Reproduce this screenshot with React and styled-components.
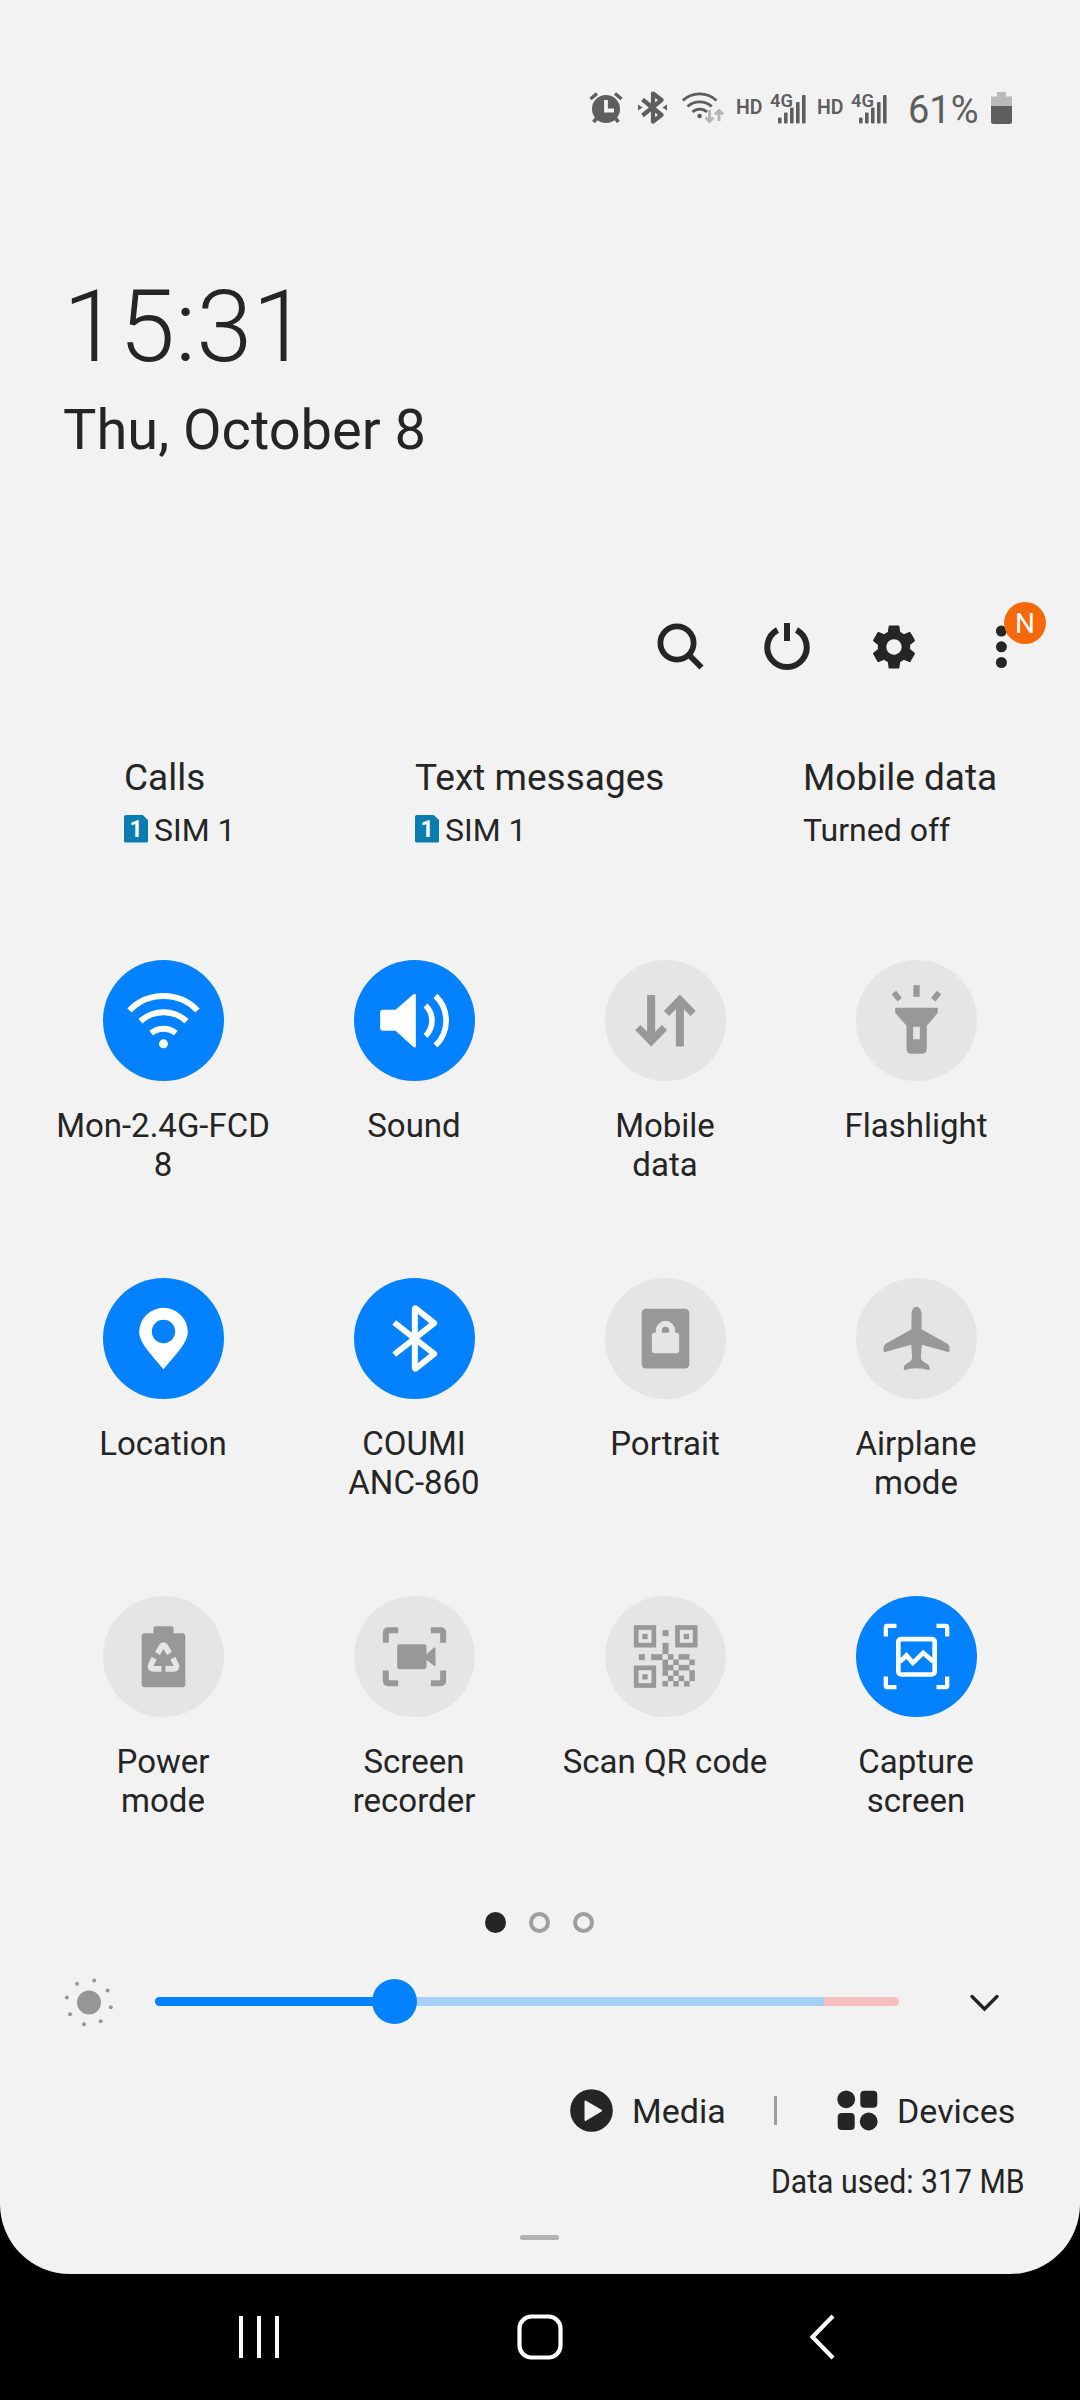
import React from "react";
import styled, { createGlobalStyle } from "styled-components";

const INK = "#252525";
const BLUE = "#0381fe";
const MUTED = "#989898";
const OFF = "#e5e5e5";
const SURFACE = "#f2f2f2";
const STATUS = "#5e5e5e";

const GlobalStyle = createGlobalStyle`
  html, body { margin: 0; padding: 0; background: #000; }
  * { box-sizing: border-box; }
  svg { display: block; flex: none; }
`;

const Screen = styled.div`
  width: 1080px;
  height: 2400px;
  display: flex;
  flex-direction: column;
  overflow: hidden;
  background: #000;
  color: ${INK};
  font-family: Roboto, "Liberation Sans", sans-serif;
`;

const Panel = styled.main`
  height: 2274px;
  display: flex;
  flex-direction: column;
  background: ${SURFACE};
  border-radius: 0 0 70px 70px;
`;

const StatusBar = styled.header`
  height: 55px;
  margin-top: 80px;
  padding-right: 68px;
  display: flex;
  align-items: center;
  justify-content: flex-end;
  color: ${STATUS};
`;

const StatusItem = styled.div`
  width: ${(p) => p.$w}px;
  margin-left: ${(p) => p.$gap || 0}px;
`;

const Hd = styled.span`
  width: 26px;
  margin-left: ${(p) => p.$gap}px;
  font-size: 19.5px;
  font-weight: 600;
  line-height: 24px;
  white-space: nowrap;
`;

const Percent = styled.span`
  width: 72px;
  margin: 4px 11px 0 21px;
  font-size: 38px;
  line-height: 44px;
  white-space: nowrap;
`;

const ClockBlock = styled.section`
  height: 331px;
  margin-top: 132px;
  padding-top: 1px;
  padding-left: 63px;
`;

const Time = styled.div`
  font-size: 101px;
  font-weight: 300;
  line-height: 118px;
`;

const DateLine = styled.div`
  margin-top: 11px;
  font-size: 56px;
  line-height: 66px;
`;

const Actions = styled.nav`
  height: 98px;
  padding-right: 25px;
  display: flex;
  justify-content: flex-end;
`;

const ActionButton = styled.div`
  position: relative;
  width: 107.2px;
  height: 98px;
  display: flex;
  align-items: center;
  justify-content: center;
`;

const Badge = styled.span`
  position: absolute;
  top: 4px;
  right: 9px;
  width: 42px;
  height: 42px;
  border-radius: 50%;
  background: #f6690b;
  color: #fff;
  font-size: 28px;
  line-height: 43px;
  text-align: center;
`;

const SimRow = styled.section`
  height: 95px;
  margin-top: 60px;
  padding-left: 124px;
  display: grid;
  grid-template-columns: 291px 388px auto;
`;

const SimTitle = styled.div`
  font-size: 37px;
  line-height: 44px;
`;

const SimValue = styled.div`
  margin-top: 10px;
  display: flex;
  align-items: center;
  gap: 6px;
  font-size: 32px;
  line-height: 40px;
`;

const SimChip = styled.span`
  width: 24px;
  height: 28px;
  margin-bottom: 3px;
  border-radius: 2px;
  background: #0a7cb0;
  clip-path: polygon(0 0, 76% 0, 100% 20%, 100% 100%, 0 100%);
  color: #fff;
  font-size: 23px;
  font-weight: 700;
  line-height: 29px;
  text-align: center;
`;

const Tiles = styled.section`
  margin-top: 109px;
  padding-left: 38px;
  display: grid;
  grid-template-columns: repeat(4, 251px);
  grid-template-rows: 318px 318px 275px;
`;

const Tile = styled.div`
  display: flex;
  flex-direction: column;
  align-items: center;
`;

const TileCircle = styled.div`
  width: 121px;
  height: 121px;
  border-radius: 50%;
  background: ${(p) => (p.$on ? BLUE : OFF)};
  color: ${(p) => (p.$on ? "#fff" : MUTED)};
`;

const TileLabel = styled.div`
  margin-top: 26px;
  padding-right: 1px;
  font-size: 33px;
  line-height: 38.7px;
  text-align: center;
  white-space: pre;
`;

const Pager = styled.div`
  height: 21px;
  margin-top: 41px;
  padding-right: 2px;
  display: flex;
  justify-content: center;
  gap: 23px;
`;

const PageDot = styled.span`
  width: 21px;
  height: 21px;
  border-radius: 50%;
  border: 4px solid ${(p) => (p.$active ? INK : "#9f9f9f")};
  background: ${(p) => (p.$active ? INK : "transparent")};
`;

const BrightnessRow = styled.section`
  height: 60px;
  margin-top: 38px;
  padding-left: 64px;
  display: flex;
  align-items: center;
`;

const Track = styled.div`
  width: 744px;
  height: 9px;
  margin: 0 68px 0 41px;
  display: flex;
  align-items: center;
  border-radius: 5px;
  background: linear-gradient(to right, #a8d0f7 669px, #f6bebe 669px);
`;

const Filled = styled.div`
  width: 239px;
  height: 9px;
  border-radius: 5px 0 0 5px;
  background: ${BLUE};
`;

const Thumb = styled.div`
  width: 45px;
  height: 45px;
  margin-left: -22px;
  flex: none;
  border-radius: 50%;
  background: ${BLUE};
`;

const Links = styled.section`
  height: 44px;
  margin-top: 57px;
  padding-right: 66px;
  display: flex;
  align-items: center;
  justify-content: flex-end;
`;

const LinkText = styled.span`
  width: ${(p) => p.$w}px;
  margin-left: 19px;
  font-size: 34px;
  line-height: 40px;
  padding-top: 1px;
`;

const Divider = styled.span`
  width: 3px;
  height: 29px;
  margin: 0 60px 0 48px;
  background: #9c9c9c;
`;

const DataUsed = styled.div`
  height: 40px;
  margin-top: 29px;
  padding-right: 55px;
  font-size: 34px;
  line-height: 40px;
  text-align: right;

  span {
    display: inline-block;
    transform: scaleX(0.888);
    transform-origin: right center;
  }
`;

const Handle = styled.div`
  width: 39px;
  height: 5px;
  margin: 34px 0 0 520px;
  border-radius: 3px;
  background: #b1b1b1;
`;

const NavBar = styled.footer`
  height: 126px;
  display: flex;
  align-items: center;
  padding-left: 239px;
  color: #fff;
`;

const NavButton = styled.div`
  margin-left: ${(p) => p.$gap || 0}px;
`;

const TileSvg = ({ children }) => (
  <svg width="121" height="121" viewBox="-181.5 -181.5 363 363" fill="currentColor">
    {children}
  </svg>
);

const stroke = (w, extra) => ({ fill: "none", stroke: "currentColor", strokeWidth: w, ...extra });

const WifiIcon = () => (
  <TileSvg>
    <g {...stroke(18)}>
      <path d="M-102-30A142 142 0 0 1 102-30" />
      <path d="M-69 2A102 102 0 0 1 69 2" />
      <path d="M-37 38A58 58 0 0 1 37 38" />
    </g>
    <circle cy="70" r="13.5" />
  </TileSvg>
);

const SoundIcon = () => (
  <TileSvg>
    <path d="M-96-32H-57L-4-78Q4-84 4-75V76Q4 85-4 79L-57 31H-96Q-103 31-103 24V-25Q-103-32-96-32Z" />
    <g {...stroke(17)}>
      <path d="M33-45A63 63 0 0 1 33 46" />
      <path d="M63-74A103 103 0 0 1 63 75" />
    </g>
  </TileSvg>
);

const DataIcon = () => (
  <TileSvg>
    <path d="M-43-76V66M-83 21L-43 62-3 21M43 77V-65M3-21L43-62 83-21" {...stroke(22)} />
    <path d="M-55-76H-31V60H-55ZM31-60H55V77H31Z" />
  </TileSvg>
);

const FlashlightIcon = () => (
  <TileSvg>
    <rect x="-9.5" y="-106" width="19" height="35" />
    <rect x="-8.5" y="-14" width="17" height="28" transform="translate(-59 -73) rotate(-38)" />
    <rect x="-8.5" y="-14" width="17" height="28" transform="translate(59 -73) rotate(38)" />
    <path
      fillRule="evenodd"
      d="M-64-38H64V-23L31 16V84Q31 100 15 100H-15Q-30 100-30 84V16L-64-23ZM-10 19V56H10V19Z"
    />
  </TileSvg>
);

const LocationIcon = () => (
  <TileSvg>
    <path
      fillRule="evenodd"
      d="M0 93C-14 71-73 18-73-19A73 73 0 0 1 73-19C73 18 14 71 0 93ZM0-56A35 35 0 1 0 0 14A35 35 0 1 0 0-56Z"
    />
  </TileSvg>
);

const BluetoothIcon = () => (
  <TileSvg>
    <path d="M-61-48L59 46 4 90Q1 92 1 87V-87Q1-92 4-90L59-46-61 48" {...stroke(18, { strokeLinejoin: "round" })} />
  </TileSvg>
);

const PortraitIcon = () => (
  <TileSvg>
    <rect x="-71.5" y="-89" width="143" height="179" rx="13" />
    <rect x="-41" y="-17" width="82" height="61" rx="8" fill={OFF} />
    <path d="M-20-12V-24A20 20 0 0 1 20-24V-12" fill="none" stroke={OFF} strokeWidth="18" />
  </TileSvg>
);

const AirplaneIcon = () => (
  <TileSvg>
    <path d="M0-95C9-95 15-84 15-73V-28L90 14Q99 19 99 29V36Q99 42 92 40L16 19 13 55Q13 65 20 69L33 77Q39 81 39 88V95Q20 89 0 89T-38 95V88Q-38 81-32 77L-20 69Q-13 65-13 55L-16 19-92 40Q-99 42-99 36V29Q-99 19-90 14L-15-28V-73C-15-84-9-95 0-95Z" />
  </TileSvg>
);

const PowerModeIcon = () => (
  <TileSvg>
    <rect x="-65.5" y="-70" width="131" height="162" rx="9" />
    <rect x="-30" y="-91" width="60" height="30" rx="6" />
    <g fill="none" stroke={OFF} strokeWidth="17">
      <path d="M-18-9L-6-30Q0-38 6-30L18-9" />
      <path d="M-28 5L-38 25Q-42 37-30 37H-6" />
      <path d="M28 5L38 25Q42 37 30 37H6" />
    </g>
    <path d="M0-19L24 27H-24Z" />
  </TileSvg>
);

const RecorderIcon = () => (
  <TileSvg>
    <path
      d="M-49-79H-78Q-86-79-86-71V-41M49-79H78Q86-79 86-71V-41M-49 80H-78Q-86 80-86 72V42M49 80H78Q86 80 86 72V42"
      {...stroke(18)}
    />
    <rect x="-52" y="-37" width="88" height="75" rx="7" />
    <path d="M34-5L58-26Q63-30 63-24V25Q63 31 58 27L34 9Z" />
  </TileSvg>
);

const QR_CELLS = ["010110", "101001", "110110", "101001", "010101", "101010"];

const QrIcon = () => (
  <TileSvg>
    {[[-95, -94], [29, -94], [-95, 27]].map(([x, y]) => (
      <g key={`${x}${y}`}>
        <rect x={x + 7} y={y + 7} width="53" height="53" {...stroke(14)} />
        <rect x={x + 25.5} y={y + 26} width="16" height="16" />
      </g>
    ))}
    <rect x="-9" y="-79" width="18" height="18" />
    <rect x="-9" y="-41" width="18" height="34" />
    <rect x="-80" y="-7" width="18" height="18" />
    <rect x="-43" y="-7" width="34" height="18" />
    {QR_CELLS.map((row, r) =>
      [...row].map((c, i) =>
        c === "1" ? <rect key={`${r}-${i}`} x={-9 + i * 16.1} y={-7 + r * 16.1} width="16.6" height="16.6" /> : null
      )
    )}
  </TileSvg>
);

const CaptureIcon = () => (
  <TileSvg>
    <path
      d="M-60-92H-88Q-92-92-92-88V-60M60-92H88Q92-92 92-88V-60M-60 92H-88Q-92 92-92 88V60M60 92H88Q92 92 92 88V60"
      {...stroke(13)}
    />
    <rect x="-54.5" y="-52" width="109" height="106" rx="8" {...stroke(14)} />
    <path d="M-50 16L-30-3-11 19 20-11 50 15" {...stroke(14)} />
  </TileSvg>
);

const AlarmIcon = () => (
  <svg width="34" height="32" viewBox="0 0 34 32" fill="currentColor">
    <circle cx="17" cy="17" r="14" />
    <path d="M1.5 7L8 1.5M32.5 7L26 1.5" {...stroke(3.4)} />
    <path d="M8 26L4.5 30M26 26L29.5 30" {...stroke(3.6)} />
    <path d="M17 8V18.500H25" fill="none" stroke={SURFACE} strokeWidth="3.8" />
  </svg>
);

const StatusBluetoothIcon = () => (
  <svg width="29" height="33" viewBox="0 0 29 33" fill="currentColor">
    <path d="M4.500 8.500L23.500 24 15 30.500V2.500L23.500 9 4.500 24.500" {...stroke(4.2, { strokeLinejoin: "round" })} />
    <path d="M0 13.500L4.500 16.500 0 19.500ZM29 13.500L24.500 16.500 29 19.500Z" />
  </svg>
);

const StatusWifiIcon = () => (
  <svg width="42" height="32" viewBox="0 0 42 32" fill="currentColor">
    <g {...stroke(2.8)}>
      <path d="M.8 8.500A25 25 0 0 1 34.500 8.500" />
      <path d="M5.500 14.500A18 18 0 0 1 29.800 14.500" />
      <path d="M10.500 20A10.500 10.500 0 0 1 25 20" />
    </g>
    <circle cx="17.6" cy="24" r="2.3" />
    <g fill="none" stroke="#b4b4b4" strokeWidth="2.8">
      <path d="M27.500 18V29M23.500 25.500L27.500 29.500 31.500 25.500" />
      <path d="M37 29V19M33 22.500L37 18.500 41 22.500" />
    </g>
  </svg>
);

const SignalBox = styled(StatusItem)`
  svg { overflow: visible; }
`;

const Signal = () => (
  <SignalBox $w={36} $gap={8}>
    <svg width="36" height="32" viewBox="0 0 36 32" fill="currentColor">
      {[[8, 25.5], [14, 20.5], [20, 15.5], [26, 10], [32, 3]].map(([x, y]) => (
        <rect key={x} x={x} y={y} width="3.6" height={31.5 - y} rx="1" />
      ))}
      <text x="0" y="15" fontSize="18.5" fontWeight="600" textLength="23" lengthAdjust="spacingAndGlyphs" stroke={SURFACE} strokeWidth="2" paintOrder="stroke">
        4G
      </text>
    </svg>
  </SignalBox>
);

const BatteryIcon = () => (
  <svg width="21" height="32" viewBox="0 0 21 32">
    <path d="M6 0H15V4.500H21V14H0V4.500H6Z" fill="#bababa" />
    <path d="M0 14H21V29.500Q21 32 18.500 32H2.500Q0 32 0 29.500Z" fill={STATUS} />
  </svg>
);

const SearchIcon = () => (
  <svg width="48" height="48" viewBox="0 0 48 48" {...stroke(5.8)}>
    <circle cx="21" cy="20" r="16.6" />
    <path d="M33 32L45.500 44.500" />
  </svg>
);

const PowerIcon = () => (
  <svg width="48" height="48" viewBox="0 0 48 48" {...stroke(6)}>
    <path d="M14.500 7A19.700 19.700 0 1 0 33.500 7" />
    <path d="M24 0V18" />
  </svg>
);

const GearIcon = () => (
  <svg width="54" height="54" viewBox="0 0 24 24" fill={INK}>
    <path d="M19.140 12.940c.04-.3.060-.610.060-.940 0-.320-.020-.640-.070-.940l2.030-1.580c.180-.140.230-.410.120-.610l-1.920-3.320c-.120-.220-.370-.290-.590-.220l-2.390.960c-.5-.380-1.030-.7-1.620-.940l-.360-2.540c-.040-.240-.240-.410-.480-.410h-3.840c-.240 0-.430.170-.470.410l-.360 2.540c-.590.240-1.130.570-1.620.940l-2.390-.960c-.220-.080-.470 0-.590.220L2.740 8.870c-.120.210-.080.470.120.610l2.030 1.580c-.050.3-.090.630-.090.940s.020.640.070.940l-2.030 1.580c-.180.140-.230.410-.120.610l1.920 3.320c.120.220.370.290.590.220l2.390-.960c.5.380 1.030.7 1.620.940l.360 2.540c.050.240.240.410.480.410h3.840c.240 0 .440-.170.470-.410l.360-2.540c.590-.240 1.130-.560 1.620-.940l2.390.960c.220.080.470 0 .590-.220l1.920-3.320c.120-.220.070-.470-.120-.610l-2.010-1.580zM12 15.400c-1.880 0-3.400-1.520-3.400-3.400s1.520-3.400 3.400-3.400 3.400 1.520 3.400 3.400-1.520 3.400-3.400 3.400z" />
  </svg>
);

const MoreIcon = () => (
  <svg width="12" height="44" viewBox="0 0 12 44" fill={INK}>
    <circle cx="6.4" cy="6" r="5.5" />
    <circle cx="6.4" cy="21.8" r="5.5" />
    <circle cx="6.4" cy="37.5" r="5.5" />
  </svg>
);

const SUN_RAYS = [[13, 6.3], [30.2, 3], [43.6, 13], [46.8, 29.7], [36.6, 43.7], [20, 46.7], [6, 36.7], [2.8, 20]];

const SunIcon = () => (
  <svg width="50" height="54" viewBox="0 -2 50 54" fill="#969696">
    <g transform="translate(0 1.5)">
      <circle cx="25" cy="25" r="12" />
      {SUN_RAYS.map(([x, y]) => (
        <circle key={x} cx={x} cy={y} r="2" />
      ))}
    </g>
  </svg>
);

const ChevronDown = () => (
  <svg width="34" height="24" viewBox="0 0 34 24" {...stroke(3.4, { strokeLinecap: "round" })}>
    <path d="M5 7.500L17.500 20 30 7.500" />
  </svg>
);

const PlayIcon = () => (
  <svg width="43" height="43" viewBox="0 0 43 43">
    <circle cx="21.5" cy="21.5" r="21.3" fill={INK} />
    <path d="M15.500 12.500L31 21.600 15.500 31Z" fill={SURFACE} stroke={SURFACE} strokeWidth="2" strokeLinejoin="round" />
  </svg>
);

const DevicesIcon = () => (
  <svg width="41" height="41" viewBox="0 0 41 41" fill={INK}>
    <circle cx="9.2" cy="9.3" r="8.9" />
    <rect x="23.3" y="0.7" width="17" height="17" rx="4" />
    <rect x="0.7" y="23" width="17" height="17" rx="4" />
    <circle cx="31.7" cy="31.5" r="8.9" />
  </svg>
);

const RecentsIcon = () => (
  <svg width="40" height="44" viewBox="0 0 40 44" {...stroke(4)}>
    <path d="M2 1V43M20 1V43M38 1V43" />
  </svg>
);

const HomeIcon = () => (
  <svg width="46" height="46" viewBox="0 0 46 46" {...stroke(4.2)}>
    <rect x="2.5" y="2.5" width="41" height="41" rx="12" />
  </svg>
);

const BackIcon = () => (
  <svg width="30" height="46" viewBox="0 0 30 46" {...stroke(4.2)}>
    <path d="M24 2L3.500 23 24 44" />
  </svg>
);

const TILES = [
  { label: "Mon-2.4G-FCD\n8", Icon: WifiIcon, on: true },
  { label: "Sound", Icon: SoundIcon, on: true },
  { label: "Mobile\ndata", Icon: DataIcon },
  { label: "Flashlight", Icon: FlashlightIcon },
  { label: "Location", Icon: LocationIcon, on: true },
  { label: "COUMI\nANC-860", Icon: BluetoothIcon, on: true },
  { label: "Portrait", Icon: PortraitIcon },
  { label: "Airplane\nmode", Icon: AirplaneIcon },
  { label: "Power\nmode", Icon: PowerModeIcon },
  { label: "Screen\nrecorder", Icon: RecorderIcon },
  { label: "Scan QR code", Icon: QrIcon },
  { label: "Capture\nscreen", Icon: CaptureIcon, on: true },
];

const SIMS = [
  { title: "Calls", value: "SIM 1", chip: "1" },
  { title: "Text messages", value: "SIM 1", chip: "1" },
  { title: "Mobile data", value: "Turned off" },
];

export default function App() {
  return (
    <Screen>
      <GlobalStyle />
      <Panel>
        <StatusBar>
          <StatusItem $w={34}><AlarmIcon /></StatusItem>
          <StatusItem $w={29} $gap={15}><StatusBluetoothIcon /></StatusItem>
          <StatusItem $w={42} $gap={15}><StatusWifiIcon /></StatusItem>
          <Hd $gap={12}>HD</Hd>
          <Signal />
          <Hd $gap={11}>HD</Hd>
          <Signal />
          <Percent>61%</Percent>
          <BatteryIcon />
        </StatusBar>

        <ClockBlock>
          <Time>15:31</Time>
          <DateLine>Thu, October 8</DateLine>
        </ClockBlock>

        <Actions>
          <ActionButton><SearchIcon /></ActionButton>
          <ActionButton><PowerIcon /></ActionButton>
          <ActionButton><GearIcon /></ActionButton>
          <ActionButton>
            <MoreIcon />
            <Badge>N</Badge>
          </ActionButton>
        </Actions>

        <SimRow>
          {SIMS.map((s) => (
            <div key={s.title}>
              <SimTitle>{s.title}</SimTitle>
              <SimValue>
                {s.chip && <SimChip>{s.chip}</SimChip>}
                {s.value}
              </SimValue>
            </div>
          ))}
        </SimRow>

        <Tiles>
          {TILES.map(({ label, Icon, on }) => (
            <Tile key={label}>
              <TileCircle $on={on}><Icon /></TileCircle>
              <TileLabel>{label}</TileLabel>
            </Tile>
          ))}
        </Tiles>

        <Pager>
          <PageDot $active />
          <PageDot />
          <PageDot />
        </Pager>

        <BrightnessRow>
          <SunIcon />
          <Track>
            <Filled />
            <Thumb />
          </Track>
          <ChevronDown />
        </BrightnessRow>

        <Links>
          <PlayIcon />
          <LinkText $w={94}>Media</LinkText>
          <Divider />
          <DevicesIcon />
          <LinkText $w={117}>Devices</LinkText>
        </Links>

        <DataUsed><span>Data used: 317 MB</span></DataUsed>
        <Handle />
      </Panel>

      <NavBar>
        <NavButton><RecentsIcon /></NavButton>
        <NavButton $gap={238}><HomeIcon /></NavButton>
        <NavButton $gap={246}><BackIcon /></NavButton>
      </NavBar>
    </Screen>
  );
}
